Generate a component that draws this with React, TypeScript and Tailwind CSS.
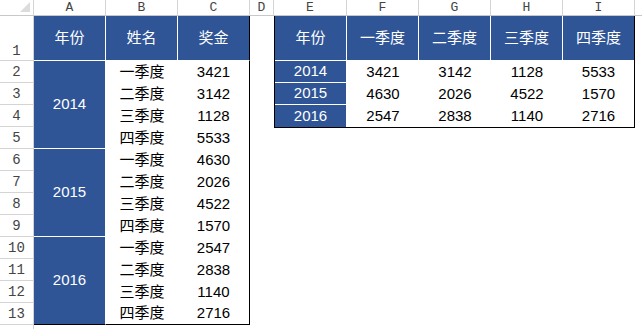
import React from 'react';

const leftRows = [
  { year: '2014', items: [['一季度', 3421], ['二季度', 3142], ['三季度', 1128], ['四季度', 5533]] },
  { year: '2015', items: [['一季度', 4630], ['二季度', 2026], ['三季度', 4522], ['四季度', 1570]] },
  { year: '2016', items: [['一季度', 2547], ['二季度', 2838], ['三季度', 1140], ['四季度', 2716]] },
];

const quarters = ['一季度', '二季度', '三季度', '四季度'];

const rightRows = [
  { year: '2014', vals: [3421, 3142, 1128, 5533] },
  { year: '2015', vals: [4630, 2026, 4522, 1570] },
  { year: '2016', vals: [2547, 2838, 1140, 2716] },
];

const colHeads = [
  { label: 'A', w: 'w-[72px]' },
  { label: 'B', w: 'w-[72px]' },
  { label: 'C', w: 'w-[72px]' },
  { label: 'D', w: 'w-[24px]' },
  { label: 'E', w: 'w-[73px]' },
  { label: 'F', w: 'w-[72px]' },
  { label: 'G', w: 'w-[72px]' },
  { label: 'H', w: 'w-[72px]' },
  { label: 'I', w: 'w-[72px]' },
];

export default function App() {
  return (
    <div className="w-[642px] h-[329px] overflow-hidden bg-white font-['Liberation_Sans','Noto_Sans_CJK_SC',sans-serif] text-[15px]">
      {/* column headers */}
      <div className="flex h-[16px] border-b border-[#c8c8c8] font-['Liberation_Mono',monospace] text-[13px] text-[#444]">
        <div className="w-[34px] shrink-0 border-r border-[#d4d4d4] flex items-end justify-end pr-[3px] pb-[3px]">
          <svg width="10" height="10" viewBox="0 0 10 10">
            <polygon points="0,10 10,10 10,0" fill="#dcdcdc" />
          </svg>
        </div>
        {colHeads.map((c) => (
          <div key={c.label} className={`${c.w} shrink-0 border-r border-[#d4d4d4] flex items-center justify-center leading-none`}>
            {c.label}
          </div>
        ))}
        <div className="flex-1" />
      </div>

      <div className="flex">
        {/* row headers */}
        <div className="w-[34px] shrink-0 border-r border-[#d4d4d4] font-['Liberation_Mono',monospace] text-[14px] text-[#444]">
          <div className="h-[45px] border-b border-[#d4d4d4] flex items-end justify-center pb-[2px] leading-none">1</div>
          {Array.from({ length: 12 }, (_, i) => (
            <div key={i} className="h-[22px] border-b border-[#d4d4d4] flex items-center justify-center leading-none">
              {i + 2}
            </div>
          ))}
          {/* row 14, cut off by the window */}
          <div className="h-[22px]" />
        </div>

        {/* left table */}
        <div className="w-[216px] shrink-0 self-start grid grid-cols-[72px_72px_72px] grid-rows-[45px_repeat(12,22px)]">
          <div className="bg-[#2f5597] text-white border-r border-b border-white flex items-center justify-center">年份</div>
          <div className="bg-[#2f5597] text-white border-r border-b border-white flex items-center justify-center">姓名</div>
          <div className="bg-[#2f5597] text-white border-r border-r-black border-b border-b-white flex items-center justify-center">奖金</div>
          {leftRows.map((g, gi) => (
            <React.Fragment key={g.year}>
              <div
                className={`row-span-4 col-start-1 bg-[#2f5597] text-white border-r border-white flex items-center justify-center border-b ${gi === 2 ? 'border-b-black' : 'border-b-white'}`}
              >
                {g.year}
              </div>
              {g.items.map(([q, v], i) => {
                const last = gi === 2 && i === 3;
                return (
                  <React.Fragment key={i}>
                    <div className={`col-start-2 flex items-center justify-center text-black ${last ? 'border-b border-black' : ''}`}>{q}</div>
                    <div className={`col-start-3 flex items-center justify-center text-black border-r border-black ${last ? 'border-b' : ''}`}>{v}</div>
                  </React.Fragment>
                );
              })}
            </React.Fragment>
          ))}
        </div>

        {/* column D */}
        <div className="w-[24px] shrink-0" />

        {/* right table */}
        <div className="shrink-0 self-start border-l border-r border-b border-black grid grid-cols-[72px_72px_72px_72px_71px] grid-rows-[45px_22px_22px_22px]">
          <div className="bg-[#2f5597] text-white border-r border-b border-white flex items-center justify-center">年份</div>
          {quarters.map((q, i) => (
            <div
              key={q}
              className={`bg-[#2f5597] text-white border-b border-white flex items-center justify-center ${i < 3 ? 'border-r' : ''}`}
            >
              {q}
            </div>
          ))}
          {rightRows.map((r, ri) => (
            <React.Fragment key={r.year}>
              <div className={`bg-[#2f5597] text-white border-r border-white flex items-center justify-center ${ri < 2 ? 'border-b' : ''}`}>
                {r.year}
              </div>
              {r.vals.map((v, i) => (
                <div key={i} className="flex items-center justify-center text-black">{v}</div>
              ))}
            </React.Fragment>
          ))}
        </div>
        <div className="flex-1" />
      </div>
    </div>
  );
}
